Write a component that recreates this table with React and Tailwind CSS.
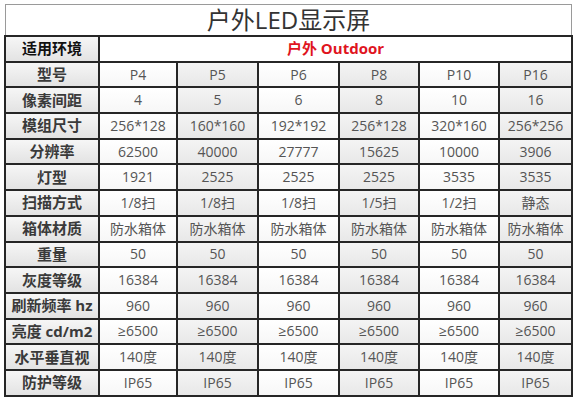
import React from "react";

const cols = ["P4", "P5", "P6", "P8", "P10", "P16"];
const rows = [
  ["像素间距", ["4", "5", "6", "8", "10", "16"]],
  ["模组尺寸", ["256*128", "160*160", "192*192", "256*128", "320*160", "256*256"]],
  ["分辨率", ["62500", "40000", "27777", "15625", "10000", "3906"]],
  ["灯型", ["1921", "2525", "2525", "2525", "3535", "3535"]],
  ["扫描方式", ["1/8扫", "1/8扫", "1/8扫", "1/5扫", "1/2扫", "静态"]],
  ["箱体材质", ["防水箱体", "防水箱体", "防水箱体", "防水箱体", "防水箱体", "防水箱体"]],
  ["重量", ["50", "50", "50", "50", "50", "50"]],
  ["灰度等级", ["16384", "16384", "16384", "16384", "16384", "16384"]],
  ["刷新频率 hz", ["960", "960", "960", "960", "960", "960"]],
  ["亮度 cd/m2", ["≥6500", "≥6500", "≥6500", "≥6500", "≥6500", "≥6500"]],
  ["水平垂直视", ["140度", "140度", "140度", "140度", "140度", "140度"]],
  ["防护等级", ["IP65", "IP65", "IP65", "IP65", "IP65", "IP65"]],
];

const font = { fontFamily: '"Open Sans", "Noto Sans CJK SC", sans-serif' };

function Head({ children, dark }) {
  return (
    <div
      className={`flex items-center justify-center bg-gradient-to-b from-[#f6f6f6] to-[#e3e3e3] text-[15px] font-bold leading-none whitespace-nowrap ${dark ? "text-[#111]" : "text-[#3a3a3a]"}`}
    >
      {children}
    </div>
  );
}

function Cell({ children, gray }) {
  return (
    <div
      className={`flex items-center justify-center text-[14px] leading-none text-[#555] whitespace-nowrap ${gray ? "bg-gradient-to-b from-[#f4f4f4] to-[#e8e8e8]" : "bg-gradient-to-b from-[#ffffff] to-[#f7f7f7]"}`}
    >
      {children}
    </div>
  );
}

export default function App() {
  return (
    <div className="w-[578px] h-[400px] bg-white pt-[4px] pl-[4px]" style={font}>
      <div className="w-[569px]">
        <div className="ml-[1px] mr-[1px] h-[31px] border-t border-l border-r border-[#9a9a9a] flex items-center justify-center bg-white text-[24px] leading-none text-[#333]">
          户外LED显示屏
        </div>
        <div className="grid grid-cols-[92px_76px_79px_79px_78px_78px_71px] grid-rows-[repeat(14,23.7px)] gap-[2px] p-[2px] bg-[#262626]">
          <Head dark>适用环境</Head>
          <div className="col-span-6 flex items-center justify-center bg-white text-[15px] font-bold leading-none text-[#e0141e]">
            户外 Outdoor
          </div>
          <Head>型号</Head>
          {cols.map((c, i) => (
            <Cell key={c} gray={i % 2 === 1}>{c}</Cell>
          ))}
          {rows.map(([label, vals]) => (
            <React.Fragment key={label}>
              <Head>{label}</Head>
              {vals.map((v, i) => (
                <Cell key={i} gray={i % 2 === 1}>{v}</Cell>
              ))}
            </React.Fragment>
          ))}
        </div>
      </div>
    </div>
  );
}
